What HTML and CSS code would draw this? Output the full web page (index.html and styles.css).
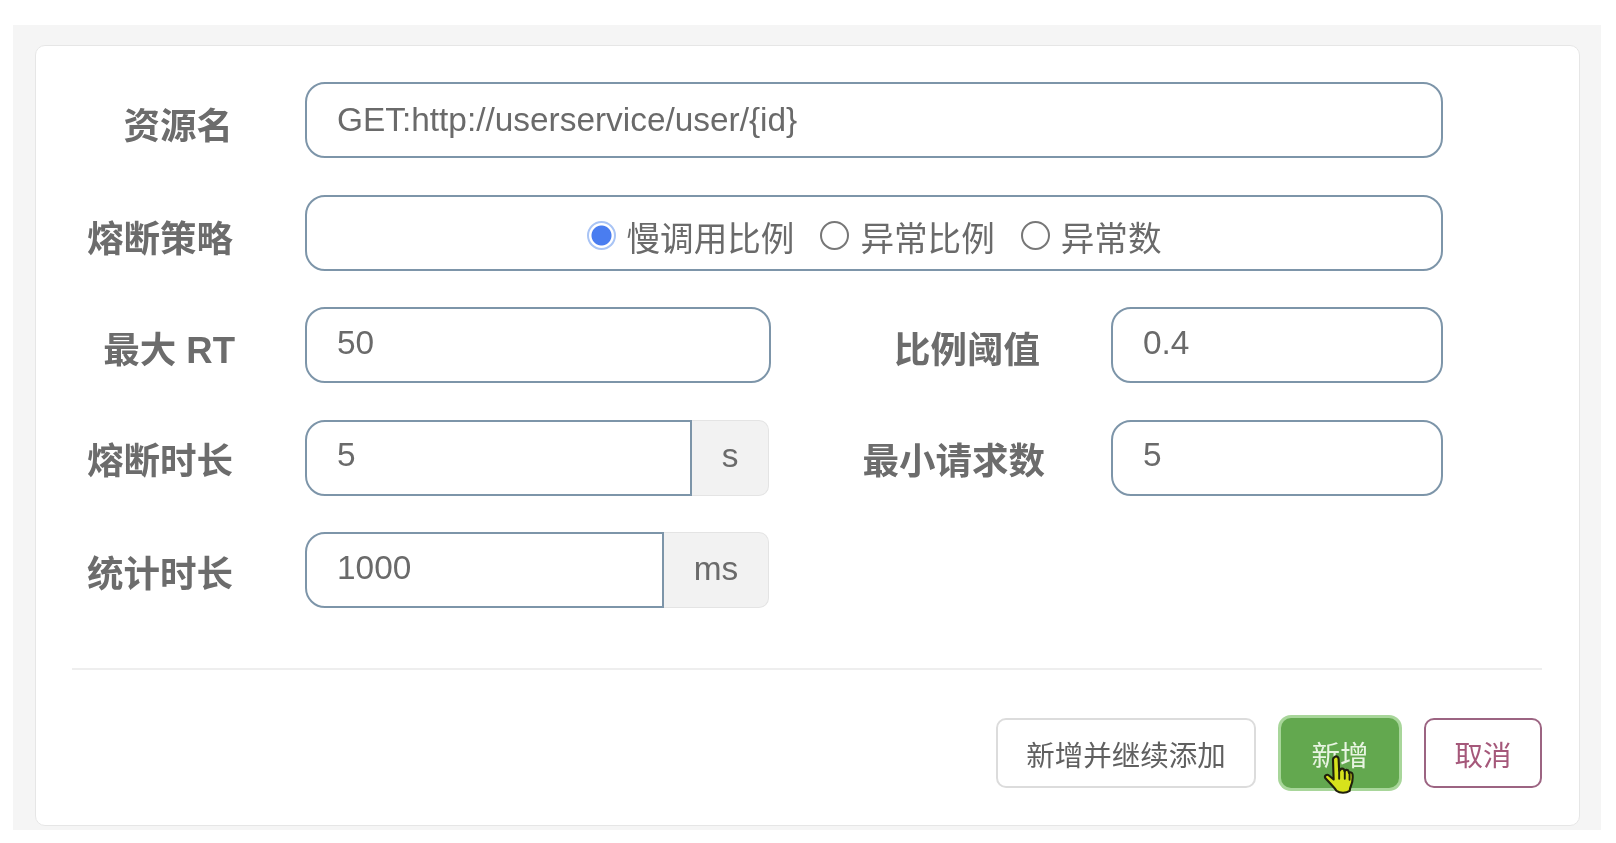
FILE: index.html
```html
<!DOCTYPE html>
<html lang="zh-CN">
<head>
<meta charset="utf-8">
<title>新增熔断规则</title>
<link rel="stylesheet" href="styles.css">
</head>
<body>
<div class="stage">
  <div class="card">
    <form class="form">
      <div class="row">
        <label class="label lab-name">资源名</label>
        <input class="input input-name grow" type="text" value="GET:http://userservice/user/{id}">
      </div>
      <div class="row">
        <label class="label lab-strategy">熔断策略</label>
        <div class="radios grow">
          <label class="radio"><input type="radio" name="s" checked><span>慢调用比例</span></label>
          <label class="radio"><input type="radio" name="s"><span>异常比例</span></label>
          <label class="radio"><input type="radio" name="s"><span>异常数</span></label>
        </div>
      </div>
      <div class="row">
        <label class="label lab-rt">最大 RT</label>
        <input class="input half" type="text" value="50">
        <label class="label second lab-ratio">比例阈值</label>
        <input class="input side" type="text" value="0.4">
      </div>
      <div class="row">
        <label class="label lab-duration">熔断时长</label>
        <div class="group half">
          <input class="input joined" type="text" value="5">
          <span class="addon addon-s">s</span>
        </div>
        <label class="label second lab-min">最小请求数</label>
        <input class="input side" type="text" value="5">
      </div>
      <div class="row">
        <label class="label">统计时长</label>
        <div class="group half">
          <input class="input joined" type="text" value="1000">
          <span class="addon addon-ms">ms</span>
        </div>
      </div>
    </form>
    <div class="actions">
      <button class="btn btn-default" type="button">新增并继续添加</button>
      <button class="btn btn-success" type="button">新增
        <svg class="cursor" viewBox="0 0 32 38" width="34" height="41" aria-hidden="true">
          <path d="M11 2.5c1.8-1.2 3.6 0 3.7 2l.5 11 1-.4c0-2 3.200-2.400 3.800-.2l.3 1c.6-1.800 3.500-1.600 3.900.4l.2 1.200c1-1 3.200-.7 3.400 1.300.4 4-.3 8.500-1.700 11.500-.5 1.200-.9 2.600-1 4.200-3.500 2.300-9.200 2.300-12.500-.2-1.500-2.800-3.600-4.300-5.700-6.800L2.300 22.600c-1.500-2.300 1.200-4.400 3.300-2.700l4.400 3.800-.6-19c0-1 .7-1.700 1.600-2.200z" fill="#d7e21c" stroke="#20200c" stroke-width="2" stroke-linejoin="round"/>
          <path d="M15.200 16v7M20.500 16v7M25 18v6" fill="none" stroke="#20200c" stroke-width="1.800" stroke-linecap="round"/>
        </svg>
      </button>
      <button class="btn btn-cancel" type="button">取消</button>
    </div>
  </div>
</div>
</body>
</html>
```

FILE: styles.css
```css
* { box-sizing: border-box; }

html, body {
  margin: 0;
  height: 100%;
  background: #fff;
}

body {
  font-family: "Liberation Sans", "Noto Sans CJK SC", sans-serif;
  color: #6a6a6a;
  overflow: hidden;
}

.stage {
  width: 1588px;
  height: 805px;
  margin: 25px 0 0 13px;
  padding: 20px 21px 4px 22px;
  background: #f5f5f5;
}

.card {
  height: 781px;
  background: #fff;
  border: 1px solid #e6e6e6;
  border-radius: 10px;
  padding: 36px 37px 0 36px;
  filter: blur(0.5px);
}

.form {
  display: flex;
  flex-direction: column;
  gap: 36.5px;
  height: 588px;
  border-bottom: 2px solid #eeeeee;
}

.row {
  display: flex;
  height: 76px;
  margin-right: 99px;
}

.label {
  flex: none;
  width: 233px;
  padding-top: 18px;
  padding-right: 72px;
  text-align: right;
  font-size: 36.5px;
  font-weight: 700;
  line-height: 50px;
  color: #6c6c6c;
}

.lab-name { padding-top: 20px; padding-right: 72px; }
.lab-strategy { padding-top: 20px; }
.lab-rt { padding-top: 19px; padding-right: 70px; }
.lab-duration { padding-top: 17px; }

.second { width: 340px; padding-right: 71px; }
.lab-ratio { padding-top: 19px; }
.lab-min { padding-top: 17px; padding-right: 66px; }

.grow { flex: 1; }
.half { width: 466px; flex: none; }
.side { flex: 1; min-width: 0; }

.input {
  height: 76px;
  border: 2px solid #7d95a9;
  border-radius: 20px;
  padding: 0 30px 5px;
  font: 33.4px "Liberation Sans", sans-serif;
  color: #6a6a6a;
  background: #fff;
  outline: none;
}

.input-name { padding-bottom: 1px; }

.group {
  display: flex;
  height: 76px;
}

.joined {
  flex: 1;
  min-width: 0;
  border-radius: 20px 0 0 20px;
}

.addon {
  flex: none;
  display: flex;
  align-items: center;
  justify-content: center;
  margin-right: 2px;
  padding-bottom: 3px;
  font-size: 33.4px;
  background: #f2f2f2;
  border: 1px solid #e4e4e4;
  border-left: 0;
  border-radius: 0 10px 10px 0;
}

.addon-s { width: 77px; }
.addon-ms { width: 105px; }

.radios {
  display: flex;
  align-items: center;
  justify-content: center;
  gap: 26px;
  height: 76px;
  border: 2px solid #7d95a9;
  border-radius: 20px;
}

.radio {
  display: flex;
  align-items: center;
  gap: 11px;
  font-size: 33.6px;
  line-height: 50px;
  padding-top: 14px;
}

.radio input {
  appearance: none;
  flex: none;
  width: 29px;
  height: 29px;
  margin: -9px 0 0;
  border: 2px solid #777;
  border-radius: 50%;
  background: #fff;
}

.radio input:checked {
  border: 2px solid #a9c4f5;
  background: radial-gradient(circle, #4a7df0 0 9.500px, #fff 10.500px);
}

.actions {
  display: flex;
  justify-content: flex-end;
  align-items: center;
  gap: 25px;
  margin-top: 48px;
}

.btn {
  position: relative;
  height: 70px;
  border-radius: 10px;
  font: 28.500px "Liberation Sans", "Noto Sans CJK SC", sans-serif;
  background: #fff;
  padding: 0;
}

.btn-default {
  width: 260px;
  border: 2px solid #dcdcdc;
  color: #606060;
}

.btn-success {
  width: 118px;
  border: 0;
  color: #e8f4e2;
  background: #63a84f;
  box-shadow: 0 0 0 3px #a8d69a;
}

.btn-cancel {
  width: 118px;
  border: 2px solid #9c6482;
  color: #a5587a;
}

.cursor {
  position: absolute;
  left: 42px;
  top: 36px;
}
```
